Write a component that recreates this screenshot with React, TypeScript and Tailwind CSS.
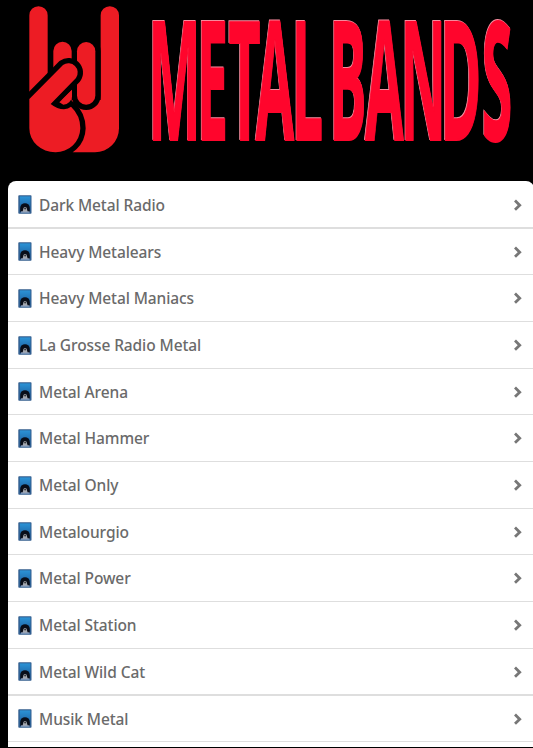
import { clsx } from 'clsx';

type Station = {
  name: string;
  height: string;
  thickBorder?: boolean;
};

const stations: Station[] = [
  { name: 'Dark Metal Radio', height: 'h-12 pt-px', thickBorder: true },
  { name: 'Heavy Metalears', height: 'h-[46px]' },
  { name: 'Heavy Metal Maniacs', height: 'h-[47px]' },
  { name: 'La Grosse Radio Metal', height: 'h-[47px]' },
  { name: 'Metal Arena', height: 'h-[46px]' },
  { name: 'Metal Hammer', height: 'h-[47px]' },
  { name: 'Metal Only', height: 'h-[47px]' },
  { name: 'Metalourgio', height: 'h-[46px]' },
  { name: 'Metal Power', height: 'h-[47px]' },
  { name: 'Metal Station', height: 'h-[47px]' },
  { name: 'Metal Wild Cat', height: 'h-[47px]', thickBorder: true },
  { name: 'Musik Metal', height: 'h-[46px]' },
];

function HornsLogo() {
  const thumb =
    'M88 297 L189 195 A28 28 0 0 1 228 234 L152 312 Q172 328 192 328 Q205 327 213 320 Q241 346 241 385 A74 74 0 0 1 166 457 A78 72 0 0 1 88 385Z';

  return (
    <svg viewBox="0 0 450 510" className="h-[170px] w-[150px] shrink-0" fill="#ed1c24">
      <path d="M302 46 A27.5 27.5 0 0 1 357 46 V385 A72 72 0 0 1 285 457 H218 L215 300 H302Z" />
      <rect x="231" y="126" width="55" height="188" rx="27.5" stroke="#000" strokeWidth="32" />
      <rect x="231" y="126" width="55" height="188" rx="27.5" />
      <path d="M160 300 V153 A27.5 27.5 0 0 1 215 153 V300Z" />
      <path d="M88 300 V46 A27.5 27.5 0 0 1 143 46 V300Z" />
      <path d={thumb} stroke="#000" strokeWidth="32" strokeLinejoin="round" />
      <path d={thumb} />
      <path d="M216 269 V289 Q212 313 190 314 L178 307Z" />
    </svg>
  );
}

function Title() {
  return (
    <svg
      viewBox="0 0 383 170"
      className="h-[170px] w-[383px] shrink-0 overflow-visible font-['Open_Sans','Noto_Sans',sans-serif] font-bold"
      fontSize="166"
    >
      {/* pale copy behind the letters gives the bevelled edge */}
      {['#f58a9c', '#ff052c'].map((color, i) => (
        <g
          key={color}
          fill={color}
          stroke={color}
          strokeWidth="2"
          transform={`translate(${i * 0.6 - 0.6} ${i * 0.5 - 0.5})`}
        >
          <text transform="translate(1 139.7) scale(.335 1)" x="-8 137 231 313 420">
            METAL
          </text>
          <text transform="translate(184 139.7) scale(.335 1)" x="-14 93 199 317 441">
            BANDS
          </text>
        </g>
      ))}
    </svg>
  );
}

function SpeakerIcon() {
  return (
    <svg viewBox="0 0 14 19" className="h-[19px] w-3.5 shrink-0">
      <defs>
        <linearGradient id="cabinet" x1="0" y1="0" x2="0" y2="1">
          <stop offset="0" stopColor="#2b93d6" />
          <stop offset="1" stopColor="#1c5795" />
        </linearGradient>
      </defs>
      <rect x=".3" y=".3" width="13.2" height="18.4" rx=".8" fill="#345f8f" />
      <rect x="1.8" y="1.4" width="10.6" height="15.4" fill="url(#cabinet)" />
      <path d="M2.2 16.8 V13 A4.8 4.8 0 0 1 11.8 13 V16.8Z" fill="#080d18" />
      <path d="M4.6 16.8 L5.4 13.4 A1.8 2 0 0 1 8.8 13.4 L9.7 16.8Z" fill="#a3a7ae" />
      <circle cx="7.1" cy="13.6" r="1" fill="#34363b" />
      <path d="M3 17 H11.5" stroke="#b8c5dc" strokeWidth="1" />
    </svg>
  );
}

function StationRow({ name, height, thickBorder }: Station) {
  return (
    <li
      className={clsx(
        'flex items-center border-[#dedede] pr-3 pl-2.5',
        height,
        thickBorder ? 'border-b-2' : 'border-b',
      )}
    >
      <a href="#" className="flex grow items-center">
        <SpeakerIcon />
        <span className="ml-[7px] grow text-[15.5px] leading-5 font-medium tracking-[-0.1px] text-[#6a6a6a]">
          {name}
        </span>
        <svg viewBox="0 0 8 12" className="h-3 w-2 shrink-0" fill="none">
          <path d="M1 1.6 L5.7 6.2 L1 10.8" stroke="#777" strokeWidth="2.8" />
        </svg>
      </a>
    </li>
  );
}

export default function App() {
  return (
    <div className="h-[748px] w-[533px] overflow-hidden bg-black font-['Noto_Sans','Open_Sans',sans-serif]">
      <header className="flex h-[181px]">
        <HornsLogo />
        <Title />
      </header>
      <ul className="ml-2 h-[566px] w-[526px] overflow-hidden rounded-t-lg bg-white">
        {stations.map((station) => (
          <StationRow key={station.name} {...station} />
        ))}
      </ul>
    </div>
  );
}
